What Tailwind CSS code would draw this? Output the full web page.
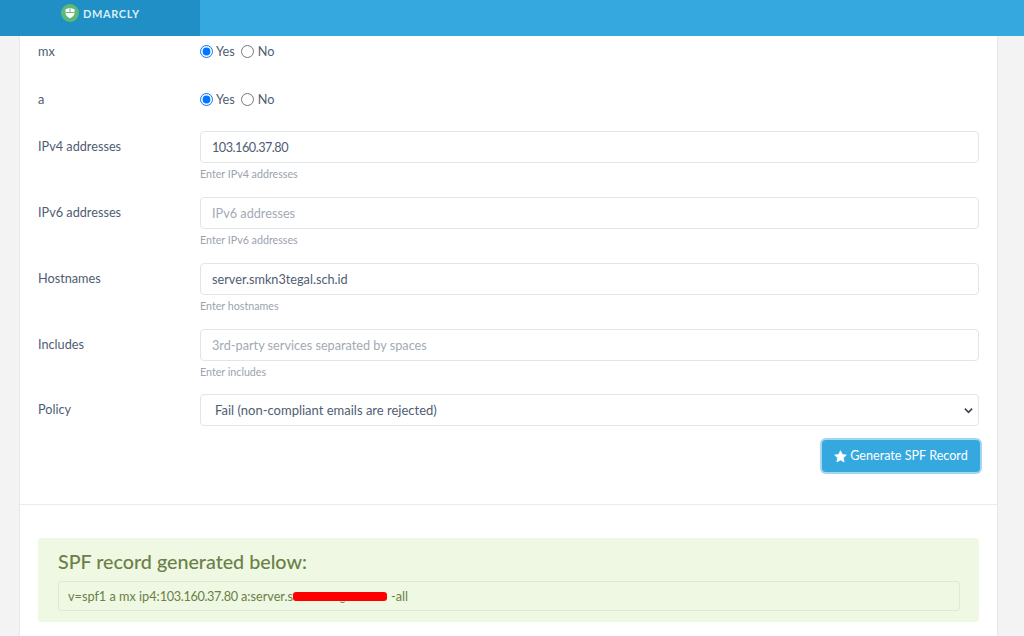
<!DOCTYPE html>
<html lang="en">
<head>
    <meta charset="UTF-8">
    <script src="https://cdn.jsdelivr.net/npm/@tailwindcss/browser@4"></script>
    <title>DMARCLY SPF Record Generator</title>
</head>
<body class="h-[636px] overflow-hidden bg-[#f3f3f3] font-['Lato',sans-serif] text-[12.7px] text-[#4f5d73]">

    <!-- Top bar -->
    <header class="flex h-[36px] bg-[#35a8e0]">
        <div class="flex w-[200px] items-start gap-[4px] bg-[#1f8fc5] pl-[61px] pt-[4px]">
            <svg class="h-[18px] w-[18px]" viewBox="0 0 20 20">
                <circle cx="10" cy="10" r="10" fill="#5cb978"/>
                <path d="M10 4.200l5 1.700v3.600c0 3.200-2.100 5.300-5 6.400-2.900-1.100-5-3.200-5-6.400V5.900z" fill="#ffffff"/>
                <path d="M10 4.200v5.300H5.200M10 9.500h4.800" stroke="#5cb978" stroke-width="1.100" fill="none"/>
            </svg>
            <span class="text-[11px] font-bold leading-[19px] tracking-[0.6px] text-[#d9eef8]">DMARCLY</span>
        </div>
    </header>

    <main class="ml-[19px] mr-[26px] border-x border-[#e6e8ea] bg-white pb-[30px]">
        <form class="px-[18px]">
            <div class="grid h-[48px] grid-cols-[162px_1fr] pt-[7px]">
                <label class="leading-[17px]">mx</label>
                <div class="flex items-center gap-[3px] self-start leading-[17px]">
                    <input type="radio" name="mx" checked class="h-[13px] w-[13px] accent-[#0075ff]">
                    <span class="mr-[3px]">Yes</span>
                    <input type="radio" name="mx" class="h-[13px] w-[13px]">
                    <span class="ml-[1px]">No</span>
                </div>
            </div>
            <div class="grid h-[47px] grid-cols-[162px_1fr] pt-[7px]">
                <label class="leading-[17px]">a</label>
                <div class="flex items-center gap-[3px] self-start leading-[17px]">
                    <input type="radio" name="a" checked class="h-[13px] w-[13px] accent-[#0075ff]">
                    <span class="mr-[3px]">Yes</span>
                    <input type="radio" name="a" class="h-[13px] w-[13px]">
                    <span class="ml-[1px]">No</span>
                </div>
            </div>

            <div class="grid h-[66px] grid-cols-[162px_1fr]">
                <label class="pt-[7px] leading-[17px]">IPv4 addresses</label>
                <div>
                    <input type="text" value="103.160.37.80" class="h-[32px] w-full rounded-[4px] border border-[#e2e5e8] px-[11px] tracking-[-0.5px] text-[#4f5d73]">
                    <p class="mt-[3px] text-[10.7px] leading-[16px] text-[#9aa3ae]">Enter IPv4 addresses</p>
                </div>
            </div>
            <div class="grid h-[66px] grid-cols-[162px_1fr]">
                <label class="pt-[7px] leading-[17px]">IPv6 addresses</label>
                <div>
                    <input type="text" placeholder="IPv6 addresses" class="h-[32px] w-full rounded-[4px] border border-[#e2e5e8] px-[11px] placeholder:text-[#a3aab4]">
                    <p class="mt-[3px] text-[10.7px] leading-[16px] text-[#9aa3ae]">Enter IPv6 addresses</p>
                </div>
            </div>
            <div class="grid h-[66px] grid-cols-[162px_1fr]">
                <label class="pt-[7px] leading-[17px]">Hostnames</label>
                <div>
                    <input type="text" value="server.smkn3tegal.sch.id" class="h-[32px] w-full rounded-[4px] border border-[#e2e5e8] px-[11px] text-[#4f5d73]">
                    <p class="mt-[3px] text-[10.7px] leading-[16px] text-[#9aa3ae]">Enter hostnames</p>
                </div>
            </div>
            <div class="grid h-[65px] grid-cols-[162px_1fr]">
                <label class="pt-[7px] leading-[17px]">Includes</label>
                <div>
                    <input type="text" placeholder="3rd-party services separated by spaces" class="h-[32px] w-full rounded-[4px] border border-[#e2e5e8] px-[11px] placeholder:text-[#a3aab4]">
                    <p class="mt-[3px] text-[10.7px] leading-[16px] text-[#9aa3ae]">Enter includes</p>
                </div>
            </div>
            <div class="grid h-[46px] grid-cols-[162px_1fr]">
                <label class="pt-[7px] leading-[17px]">Policy</label>
                <div class="relative h-[32px] rounded-[4px] border border-[#e2e5e8] pl-[14px] text-[13px] leading-[30px]">
                    Fail (non-compliant emails are rejected)
                    <svg class="absolute right-[5px] top-[11px] h-[9px] w-[9px]" viewBox="0 0 10 10">
                        <path d="M1 3l4 4 4-4" fill="none" stroke="#3f4a58" stroke-width="2"/>
                    </svg>
                </div>
            </div>
            <div class="-mr-[1px] flex justify-end">
                <button type="button" class="flex h-[32px] w-[158px] items-center justify-center gap-[3px] rounded-[4px] bg-[#35a8e0] text-[12.6px] text-white ring-2 ring-[#a3d7f1]">
                    <svg class="h-[13px] w-[13px]" viewBox="0 0 20 20">
                        <path d="M10 1l2.800 5.800 6.300.9-4.600 4.400 1.100 6.300L10 15.400l-5.600 3 1.100-6.300L.9 7.700l6.300-.9z" fill="#ffffff" stroke="#ffffff" stroke-linejoin="round"/>
                    </svg>
                    Generate SPF Record
                </button>
            </div>
        </form>

        <hr class="mt-[32px] border-t border-[#e9ebed]">

        <section class="mx-[18px] mt-[33px] h-[84px] rounded-[4px] bg-[#eff8e2] pl-[20px] pr-[19px] pt-[11px]">
            <h4 class="text-[19.7px] font-medium leading-[25px] text-[#6a8048]">SPF record generated below:</h4>
            <div class="relative mt-[7px] flex h-[30px] gap-[3px] whitespace-nowrap rounded-[3px] border border-[#dfe8d2] px-[9px] leading-[29px] text-[#6a8048]">
                <span class="w-[225px]">v=spf1 a mx ip4:<span class="tracking-[-0.35px]">103.160.37.80</span> a:server.s</span>
                <span class="w-[92px]"></span>
                <span>-all</span>
                <!-- redaction scribble, with the tail of a hidden letter under it -->
                <span class="absolute left-[234px] top-[10px] h-[9px] w-[94px] rounded-[3px] bg-[#ff0000]"></span>
                <span class="absolute left-[281px] top-[18px] h-[3px] w-[5px] rounded-b-full border-b border-[#6a8048]"></span>
            </div>
        </section>
    </main>
</body>
</html>
